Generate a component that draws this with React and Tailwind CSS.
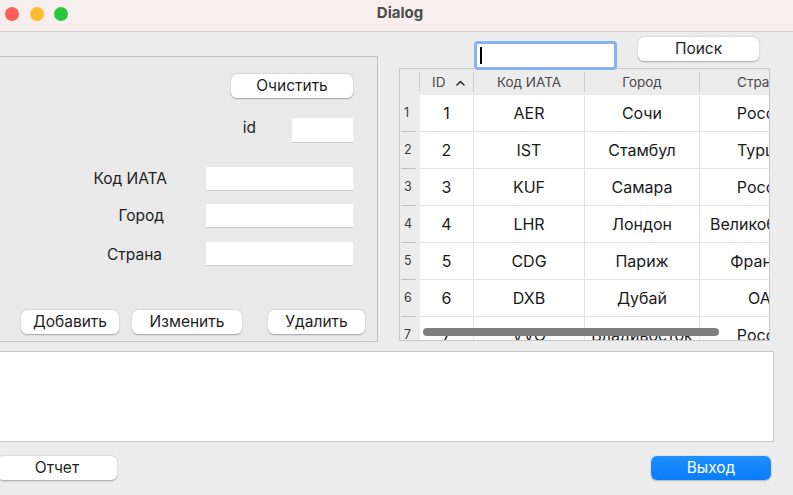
import React from "react";

const rows = [
  ["1", "AER", "Сочи", "Россия"],
  ["2", "IST", "Стамбул", "Турция"],
  ["3", "KUF", "Самара", "Россия"],
  ["4", "LHR", "Лондон", "Великобритания"],
  ["5", "CDG", "Париж", "Франция"],
  ["6", "DXB", "Дубай", "ОАЭ"],
  ["7", "VVO", "Владивосток", "Россия"],
];

function Btn({ children, className = "" }) {
  return (
    <div
      className={
        "h-[24px] shrink-0 flex items-center justify-center rounded-[6px] bg-white text-[15.5px] text-[#1e1e1e] shadow-[0_0.5px_1.5px_rgba(0,0,0,0.3)] " +
        className
      }
    >
      {children}
    </div>
  );
}

function Field({ className = "" }) {
  return (
    <div
      className={
        "h-[23px] shrink-0 bg-white shadow-[0_1px_0_rgba(0,0,0,0.12)] " + className
      }
    />
  );
}

export default function App() {
  return (
    <div className="w-[793px] h-[495px] overflow-hidden bg-[#ececec] font-['Inter','Liberation_Sans',sans-serif] text-[#1e1e1e] flex flex-col">
      {/* Title bar */}
      <div className="h-[32px] shrink-0 bg-[#f7efed] border-b border-[#d6d3d2] flex items-center">
        <div className="flex gap-[10.5px] pl-[5px] pb-[3px] shrink-0">
          <div className="w-[14px] h-[14px] rounded-full bg-[#fe5f57]" />
          <div className="w-[14px] h-[14px] rounded-full bg-[#febc2e]" />
          <div className="w-[14px] h-[14px] rounded-full bg-[#28c840]" />
        </div>
        <div className="flex-1 text-center pb-[5px] pr-[61px] text-[15px] font-bold text-[#4b4b4b]">
          Dialog
        </div>
      </div>

      {/* Main */}
      <div className="flex h-[309px] shrink-0">
        {/* Group box */}
        <div className="ml-[-12px] mt-[24px] w-[390px] h-[286px] shrink-0 border border-[#c2c2c2] bg-[#e9e9e9] flex flex-col pr-[24px]">
          <div className="mt-[17px] flex justify-end">
            <Btn className="w-[122px]">Очистить</Btn>
          </div>
          <div className="mt-[20px] flex justify-end items-center h-[24px]">
            <span className="text-[15.5px] mr-[36px] pb-[5px]">id</span>
            <div className="w-[61px] h-[24px] bg-white shadow-[0_1px_0_rgba(0,0,0,0.12)]" />
          </div>
          <div className="mt-[25px] flex justify-end items-center">
            <span className="text-[15.5px] mr-[39px]">Код ИАТА</span>
            <Field className="w-[147px]" />
          </div>
          <div className="mt-[14px] flex justify-end items-center">
            <span className="text-[15.5px] mr-[42px]">Город</span>
            <Field className="w-[147px]" />
          </div>
          <div className="mt-[14px] flex justify-end items-center">
            <span className="text-[15.5px] mr-[44px] pt-[1px]">Страна</span>
            <Field className="w-[147px]" />
          </div>
          <div className="mt-[44px] flex pl-[32px]">
            <Btn className="w-[98px]">Добавить</Btn>
            <Btn className="w-[110px] ml-[13px]">Изменить</Btn>
            <Btn className="w-[97px] ml-[26px]">Удалить</Btn>
          </div>
        </div>

        {/* Right side */}
        <div className="ml-[21px] flex flex-col">
          <div className="mt-[5px] flex items-start h-[31px]">
            <div className="ml-[75px] mt-[4px] w-[143px] h-[29px] rounded-[4px] bg-[#84b3f0] p-[3px] relative z-10">
              <div className="w-full h-full bg-white rounded-[1px] flex items-center pl-[3px]">
                <div className="w-[1.5px] h-[17px] bg-black" />
              </div>
            </div>
            <Btn className="w-[121px] ml-[21px]">Поиск</Btn>
          </div>
          {/* Table */}
          <div className="w-[371px] h-[273px] border border-[#c9c9c9] bg-white overflow-hidden relative">
            <div className="flex h-[26px] bg-[#ececec] text-[13.5px] text-[#4a4a4a]">
              <div className="w-[20px] shrink-0 flex items-center">
                <div className="w-px h-[20px] bg-[#cfcfcf] ml-auto" />
              </div>
              <div className="w-[54px] shrink-0 flex items-center">
                <span className="ml-[12px]">ID</span>
                <svg width="9" height="6" viewBox="0 0 9 6" className="ml-[11px] mt-[1px]">
                  <path d="M1 5 L4.5 1.5 L8 5" fill="none" stroke="#333" strokeWidth="1.6" strokeLinecap="round" strokeLinejoin="round" />
                </svg>
                <div className="w-px h-[20px] bg-[#cfcfcf] ml-auto" />
              </div>
              <div className="w-[111px] shrink-0 flex items-center">
                <span className="flex-1 text-center">Код ИАТА</span>
                <div className="w-px h-[20px] bg-[#cfcfcf]" />
              </div>
              <div className="w-[115px] shrink-0 flex items-center">
                <span className="flex-1 text-center">Город</span>
                <div className="w-px h-[20px] bg-[#cfcfcf]" />
              </div>
              <div className="w-[122px] shrink-0 flex items-center">
                <span className="flex-1 text-center">Страна</span>
              </div>
            </div>
            {rows.map((r, i) => (
              <div key={i} className="flex h-[37px] text-[16px] text-[#1a1a1a]">
                <div className="w-[20px] shrink-0 bg-[#ececec] flex flex-col">
                  <div className="flex-1 flex items-center pl-[4px] text-[12.5px] text-[#3a3a3a]">
                    {i + 1}
                  </div>
                  <div className="h-px w-[15px] ml-[1px] bg-[#bdbdbd]" />
                </div>
                <div className="w-[54px] shrink-0 border-r border-b border-[#e2e2e2] flex items-center justify-center">
                  {r[0]}
                </div>
                <div className="w-[111px] shrink-0 border-r border-b border-[#e2e2e2] flex items-center justify-center">
                  {r[1]}
                </div>
                <div className="w-[115px] shrink-0 border-r border-b border-[#e2e2e2] flex items-center justify-center">
                  {r[2]}
                </div>
                <div className="w-[122px] shrink-0 border-b border-[#e2e2e2] flex items-center pl-[10px] pr-[2px]">
                  <div className="w-full text-center whitespace-nowrap">{r[3]}</div>
                </div>
              </div>
            ))}
            <div className="absolute left-[23px] top-[259px] w-[296px] h-[8px] rounded-full bg-[#7f7f7f]" />
          </div>
        </div>
      </div>

      {/* Text area */}
      <div className="ml-[-2px] mt-[10px] w-[776px] h-[91px] shrink-0 bg-white border border-[#c9c9c9]" />

      {/* Bottom buttons */}
      <div className="mt-[14px] flex">
        <Btn className="w-[120px] ml-[-3px]">Отчет</Btn>
        <div className="ml-auto mr-[22px] w-[120px] h-[24px] rounded-[6px] bg-gradient-to-b from-[#1e90ff] to-[#0a7cff] text-white text-[15.5px] flex items-center justify-center shadow-[0_0.5px_1.5px_rgba(0,0,0,0.25)]">
          Выход
        </div>
      </div>
    </div>
  );
}
